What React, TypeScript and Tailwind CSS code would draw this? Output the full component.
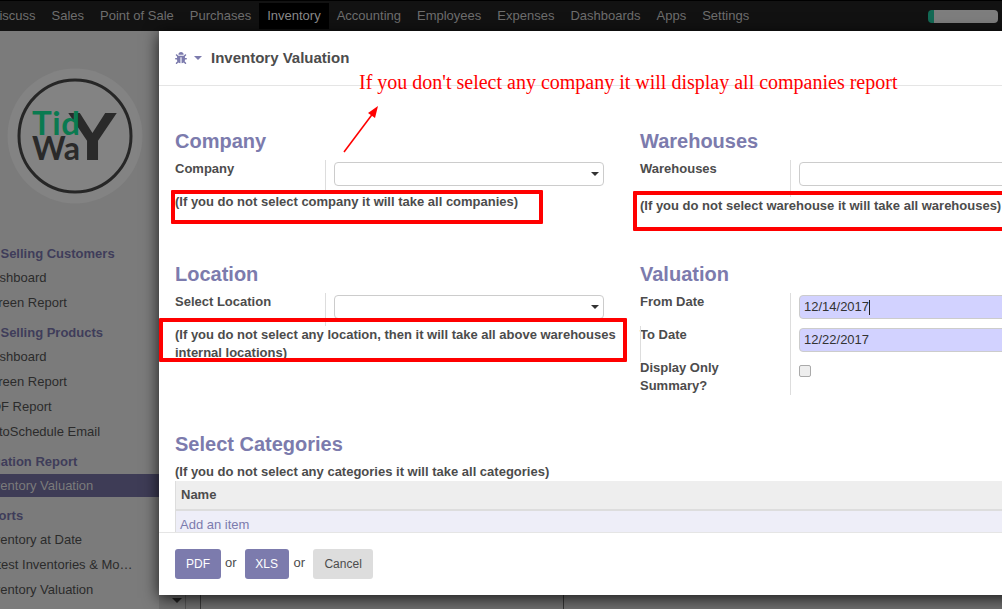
import React from 'react';
import { FaBug } from 'react-icons/fa';

const navItems = ['Discuss', 'Sales', 'Point of Sale', 'Purchases', 'Inventory', 'Accounting', 'Employees', 'Expenses', 'Dashboards', 'Apps', 'Settings'];

const sideGroups = [
  { title: 'Top Selling Customers', items: ['Dashboard', 'Screen Report'] },
  { title: 'Top Selling Products', items: ['Dashboard', 'Screen Report', 'PDF Report', 'AutoSchedule Email'] },
  { title: 'Valuation Report', items: ['Inventory Valuation'] },
  { title: 'Reports', items: ['Inventory at Date', 'Latest Inventories & Moves', 'Inventory Valuation'] },
];

const Caret = () => (
  <span className="w-0 h-0 border-x-[4px] border-x-transparent border-t-[4px] border-t-[#333]" />
);

const Logo = () => (
  <svg width="136" height="136" viewBox="0 0 136 136" className="shrink-0">
    <circle cx="68" cy="68" r="67.5" fill="#838383" />
    <circle cx="68" cy="68" r="56" fill="none" stroke="#262626" strokeWidth="3" />
    <text x="60" y="92" fontFamily="Liberation Sans" fontWeight="700" fontSize="68" fill="#2a2a2a" textLength="51" lengthAdjust="spacingAndGlyphs">Y</text>
    <text x="25" y="67" fontFamily="Lato" fontWeight="700" fontSize="33" fill="#0a7a50" textLength="48" lengthAdjust="spacing">Tid</text>
    <text x="25" y="92" fontFamily="Lato" fontWeight="700" fontSize="33" fill="#2a2a2a" textLength="48" lengthAdjust="spacingAndGlyphs">Wa</text>
  </svg>
);

const Sidebar = () => (
  <aside className="w-[159px] shrink-0 bg-[#7b7b7b] overflow-hidden">
    <div className="pt-[37px] pl-[7px]">
      <Logo />
    </div>
    <div className="pt-[41px]">
      {sideGroups.map((g) => (
        <div key={g.title} className="mb-[10px]">
          <div className="h-[18px] leading-[18px] mb-[3px] -ml-[26px] text-[13px] font-bold text-[#3f3d5a] whitespace-nowrap">{g.title}</div>
          {g.items.map((it, i) => {
            const active = g.title === 'Valuation Report';
            return (
              <div
                key={it + i}
                className={`h-[23px] leading-[23px] mb-[2px] text-[13px] whitespace-nowrap ${active ? 'bg-[#3e3c56] text-[#7b7b7b]' : 'text-[#2b2b2b]'}`}
              >
                <div className="-ml-[17px] w-[150px] truncate">{it}</div>
              </div>
            );
          })}
        </div>
      ))}
    </div>
  </aside>
);

const Field = ({ label, children, sepH }: { label: React.ReactNode; children?: React.ReactNode; sepH: string }) => (
  <div className="flex">
    <div className="w-[150px] shrink-0 text-[13px] leading-[18px] font-bold text-[#4c4c4c]">{label}</div>
    <div className={`flex-1 border-l border-[#ddd] pl-[8px] pt-[2px] ${sepH}`}>{children}</div>
  </div>
);

const SelectBox = ({ caret = true }: { caret?: boolean }) => (
  <div className="h-[24px] border border-[#ccc] rounded-[4px] bg-white flex items-center justify-end pr-[4px]">
    {caret && <Caret />}
  </div>
);

const DateBox = ({ value, cursor }: { value: string; cursor?: boolean }) => (
  <div className="h-[24px] border border-[#ccc] rounded-[4px] bg-[#d2d2ff] flex items-center pl-[4px] text-[13px] text-[#333]">
    {value}
    {cursor && <span className="w-px h-[15px] bg-[#222]" />}
  </div>
);

const SectionTitle = ({ children }: { children: React.ReactNode }) => (
  <h2 className="text-[20px] leading-[22px] font-bold text-[#7c7bad]">{children}</h2>
);

const Note = ({ children, className = '' }: { children: React.ReactNode; className?: string }) => (
  <div className={`text-[13px] leading-[18px] font-bold text-[#4c4c4c] ${className}`}>{children}</div>
);

const RedBox = ({ className }: { className: string }) => (
  <div className={`absolute border-[4px] border-[#ff0000] rounded-[1px] ${className}`} />
);

const Modal = () => (
  <div className="absolute left-[159px] top-[31px] bottom-[14px] w-[926px] bg-white flex flex-col shadow-[0_3px_15px_rgba(0,0,0,0.8)]">
    <header className="h-[55px] shrink-0 border-b border-[#e5e5e5] flex items-center pl-[16px]">
      <FaBug className="text-[#7c7bad] w-[12px] h-[12px]" />
      <span className="ml-[7px] w-0 h-0 border-x-[4px] border-x-transparent border-t-[4px] border-t-[#7c7bad]" />
      <span className="ml-[9px] text-[15px] font-bold text-[#4c4c4c]">Inventory Valuation</span>
    </header>
    <div className="flex-1 overflow-hidden px-[16px] pt-[44px]">
      <div className="grid grid-cols-[429px_429px] gap-x-[36px]">
        <section className="h-[133px]">
          <SectionTitle>Company</SectionTitle>
          <div className="mt-[8px]">
            <Field label="Company" sepH="h-[30px]"><SelectBox /></Field>
          </div>
          <Note className="mt-[3px]">(If you do not select company it will take all companies)</Note>
        </section>
        <section className="h-[133px]">
          <SectionTitle>Warehouses</SectionTitle>
          <div className="mt-[8px]">
            <Field label="Warehouses" sepH="h-[37px]"><SelectBox caret={false} /></Field>
          </div>
          <Note className="whitespace-nowrap">(If you do not select warehouse it will take all warehouses)</Note>
        </section>
        <section className="h-[170px]">
          <SectionTitle>Location</SectionTitle>
          <div className="mt-[8px]">
            <Field label="Select Location" sepH="h-[33px]"><SelectBox /></Field>
          </div>
          <Note className="w-[445px]">(If you do not select any location, then it will take all above warehouses internal locations)</Note>
        </section>
        <section className="h-[170px]">
          <SectionTitle>Valuation</SectionTitle>
          <div className="mt-[8px]">
            <Field label="From Date" sepH="h-[33px]"><DateBox value="12/14/2017" cursor /></Field>
            <Field label="To Date" sepH="h-[33px]"><DateBox value="12/22/2017" /></Field>
            <Field label={<>Display Only<br />Summary?</>} sepH="h-[36px]">
              <input type="checkbox" className="mt-[4px] w-[12px] h-[12px] block appearance-none border border-[#aaa] rounded-[2px] bg-[#eee]" readOnly />
            </Field>
          </div>
        </section>
      </div>
      <SectionTitle>Select Categories</SectionTitle>
      <Note className="mt-[8px]">(If you do not select any categories it will take all categories)</Note>
      <div className="border-l border-[#ddd]">
        <div className="h-[30px] bg-[#eeeeee] border-b-2 border-[#dddddd] pl-[5px] flex items-center text-[13px] font-bold text-[#4c4c4c]">Name</div>
        <div className="h-[30px] bg-[#eeeef8] pl-[4px] pt-[5px] text-[13px] leading-[18px] text-[#7c7bad]">Add an item</div>
      </div>
    </div>
    <footer className="h-[63px] shrink-0 border-t border-[#e5e5e5] flex items-center pl-[16px] text-[13px] text-[#4c4c4c]">
      <button className="h-[30px] w-[46px] rounded-[3px] bg-[#7c7bad] text-white text-[12px]">PDF</button>
      <span className="ml-[4px] -mt-[2px]">or</span>
      <button className="ml-[8px] h-[30px] w-[44px] rounded-[3px] bg-[#7c7bad] text-white text-[12px]">XLS</button>
      <span className="ml-[5px] -mt-[2px]">or</span>
      <button className="ml-[8px] h-[30px] w-[60px] rounded-[3px] bg-[#dddddd] text-[#4c4c4c] text-[12px]">Cancel</button>
    </footer>
  </div>
);

export default function App() {
  return (
    <div className="relative w-[1002px] h-[609px] overflow-hidden bg-[#7b7b7b] font-['Liberation_Sans',sans-serif]">
      <nav className="h-[31px] bg-[#121212] border-t border-black flex items-center text-[13px] text-[#6e6e6e] whitespace-nowrap">
        <div className="flex -ml-[18px] items-center">
          {navItems.map((n) => (
            <div key={n} className={`h-[26px] leading-[26px] px-[8px] ${n === 'Inventory' ? 'bg-black text-[#8a8a8a]' : ''}`}>{n}</div>
          ))}
        </div>
        <div className="ml-auto mr-[4px] w-[70px] h-[13px] rounded-[4px] bg-[#7e7e7e] border-l-[6px] border-[#136a55]" />
      </nav>
      <div className="flex h-[578px]">
        <Sidebar />
        <main className="flex-1 flex items-end bg-[#6f6f6f]">
          <span className="ml-[13px] mb-[6px] w-0 h-0 border-x-[5px] border-x-transparent border-t-[5px] border-t-[#222]" />
          <div className="ml-[3px] w-[16px] h-full border-x border-[#555] border-r-[#3a3a3a]" />
          <div className="ml-[362px] h-full border-l border-[#333]" />
        </main>
      </div>
      <Modal />
      {/* annotations drawn on top of the screenshot */}
      <div className="absolute left-[359px] top-[70px] text-[20px] leading-[24px] text-[#ff0000] font-['Liberation_Serif',serif] whitespace-nowrap">
        If you don't select any company it will display all companies report
      </div>
      <svg className="absolute left-[340px] top-[100px]" width="45" height="56" viewBox="0 0 45 56">
        <line x1="4" y1="52" x2="34" y2="12" stroke="#ff0000" strokeWidth="1.5" />
        <polygon points="38,6 35,18 28,13" fill="#ff0000" />
      </svg>
      <RedBox className="left-[171px] top-[190px] w-[372px] h-[34px]" />
      <RedBox className="left-[633px] top-[191px] w-[400px] h-[40px]" />
      <RedBox className="left-[159px] top-[318px] w-[468px] h-[44px]" />
      <div className="absolute left-[640px] top-[326px] w-px h-[36px] bg-[#ddd]" />
    </div>
  );
}
